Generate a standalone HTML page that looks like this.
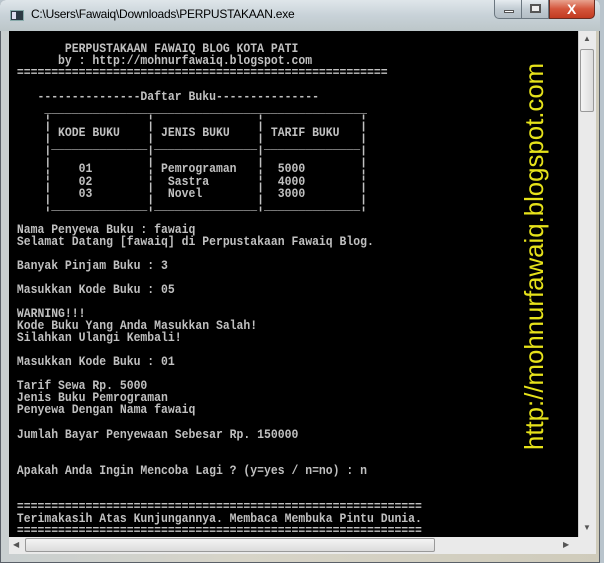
<!DOCTYPE html>
<html><head><meta charset="utf-8"><style>
html,body{margin:0;padding:0}
body{width:604px;height:563px;overflow:hidden;position:relative;background:#b9c4cc;font-family:"Liberation Sans",sans-serif}
#frame{position:absolute;left:0;top:0;width:600px;height:563px;background:linear-gradient(90deg,#c9cfd0 0%,#d7d4c8 40%,#cfcbbb 100%);border-radius:6px 6px 0 0;border:1px solid #5a6068;box-sizing:border-box}
#title{position:absolute;left:0;top:0;width:600px;height:31px;background:linear-gradient(180deg,#dfe6ea 0%,#c8d2d8 50%,#bcc6c9 100%);border-radius:6px 6px 0 0}
#ttext{position:absolute;left:31px;top:7px;font-size:12px;color:#000;letter-spacing:-0.25px}
#icon{position:absolute;left:10px;top:10px;width:14px;height:11px;background:#2c3a44;border:1px solid #8aa;box-sizing:border-box}
#icon:after{content:"";position:absolute;left:1px;top:1px;width:4px;height:7px;background:#dde}
.btn{position:absolute;top:0;height:19px;border:1px solid #6b7780;border-top:none;box-sizing:border-box;background:linear-gradient(180deg,#e6ecf0,#c2ccd3 50%,#b3bdc4)}
#min{left:494px;width:28px;border-radius:0 0 0 5px}
#min:after{content:"";position:absolute;left:9px;top:10px;width:10px;height:3px;background:#fff;border:1px solid #555;box-sizing:border-box}
#max{left:521px;width:28px}
#max:after{content:"";position:absolute;left:8px;top:4px;width:11px;height:9px;border:2px solid #555;box-sizing:border-box;background:#eee}
#close{left:549px;width:46px;border-radius:0 0 5px 0;background:linear-gradient(180deg,#e8a38f,#d4553b 50%,#c23a20);border-color:#6a2b20}
#close:after{content:"X";position:absolute;left:17px;top:1px;font-weight:bold;color:#fff;font-size:14px}
#con{position:absolute;left:9px;top:31px;width:569px;height:506px;background:#000;overflow:hidden}
pre{position:absolute;left:1px;top:12px;margin:0;font-family:"Liberation Mono",monospace;font-weight:bold;font-size:13px;line-height:12.05px;color:#c0c0c0;transform:scaleX(0.88);transform-origin:0 0}
#vt{position:absolute;left:511px;top:31px;width:30px;height:388px;writing-mode:vertical-rl;transform:rotate(180deg);font-size:25.8px;color:#e6e21a;line-height:30px;white-space:nowrap}
#vs{position:absolute;left:578px;top:31px;width:18px;height:506px;background:#eaeaea;border-left:1px solid #ccc;box-sizing:border-box}
#vs .th{position:absolute;left:1px;top:18px;width:14px;height:63px;border:1px solid #999;border-radius:2px;background:linear-gradient(90deg,#f4f4f4,#dcdcdc);box-sizing:border-box}
#hs{position:absolute;left:9px;top:537px;width:587px;height:17px;background:#eaeaea}
#hs .th{position:absolute;left:16px;top:1px;width:410px;height:14px;border:1px solid #999;border-radius:2px;background:linear-gradient(180deg,#f4f4f4,#dcdcdc);box-sizing:border-box}
.ar{position:absolute;font-size:8px;color:#555}
</style></head><body>
<div id="frame"></div>
<div id="title"><div id="icon"></div><div id="ttext">C:\Users\Fawaiq\Downloads\PERPUSTAKAAN.exe</div></div>
<div class="btn" id="min"></div><div class="btn" id="max"></div><div class="btn" id="close"></div>
<div id="con">
<pre>        PERPUSTAKAAN FAWAIQ BLOG KOTA PATI
       by : http://mohnurfawaiq.blogspot.com
 ======================================================

    ---------------Daftar Buku---------------
     _______________________________________________
     ¦              ¦               ¦              ¦
     ¦ KODE BUKU    ¦ JENIS BUKU    ¦ TARIF BUKU   ¦
     ¦______________¦_______________¦______________¦
     ¦              ¦               ¦              ¦
     ¦    01        ¦ Pemrograman   ¦  5000        ¦
     ¦    02        ¦  Sastra       ¦  4000        ¦
     ¦    03        ¦  Novel        ¦  3000        ¦
     ¦______________¦_______________¦______________¦

 Nama Penyewa Buku : fawaiq
 Selamat Datang [fawaiq] di Perpustakaan Fawaiq Blog.

 Banyak Pinjam Buku : 3

 Masukkan Kode Buku : 05

 WARNING!!!
 Kode Buku Yang Anda Masukkan Salah!
 Silahkan Ulangi Kembali!

 Masukkan Kode Buku : 01

 Tarif Sewa Rp. 5000
 Jenis Buku Pemrograman
 Penyewa Dengan Nama fawaiq

 Jumlah Bayar Penyewaan Sebesar Rp. 150000


 Apakah Anda Ingin Mencoba Lagi ? (y=yes / n=no) : n


 ===========================================================
 Terimakasih Atas Kunjungannya. Membaca Membuka Pintu Dunia.
 ===========================================================</pre>
<div id="vt">http://mohnurfawaiq.blogspot.com</div>
</div>
<div id="vs"><span class="ar" style="left:4px;top:3px">▲</span><div class="th"></div><span class="ar" style="left:4px;top:492px">▼</span></div>
<div id="hs"><span class="ar" style="left:4px;top:3px">◀</span><div class="th"></div><span class="ar" style="left:554px;top:3px">▶</span></div>
</body></html>
